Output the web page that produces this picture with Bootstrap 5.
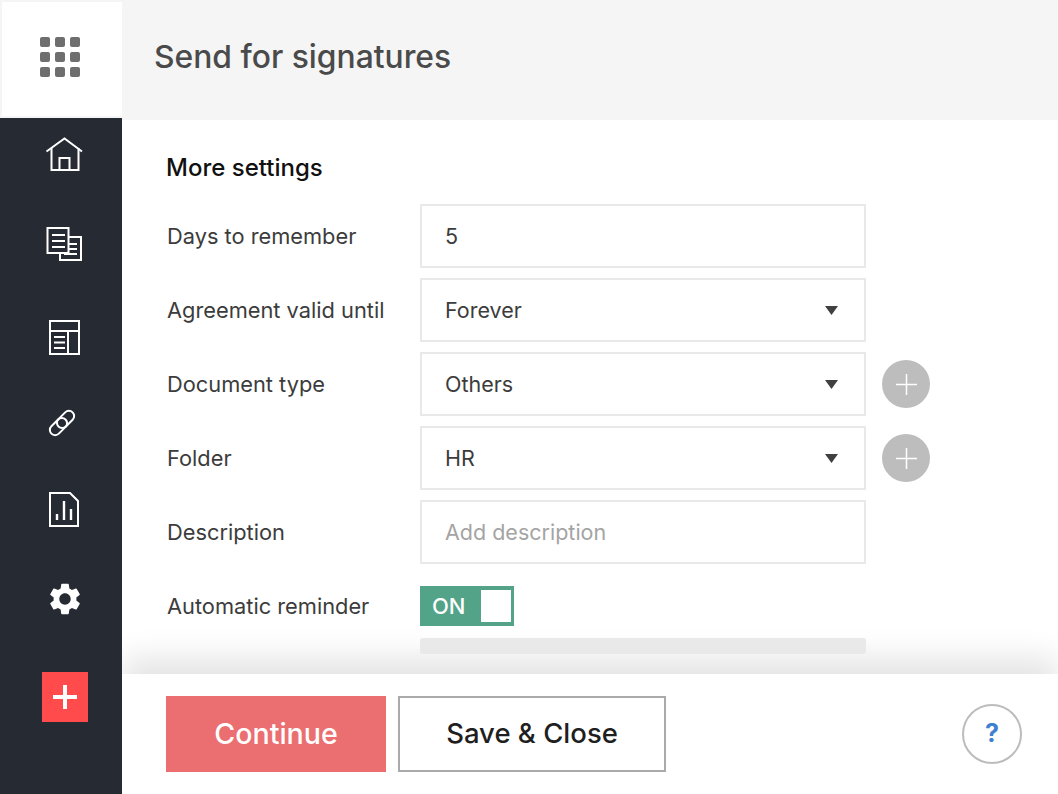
<!DOCTYPE html>
<html lang="en">
<head>
<meta charset="utf-8">
<title>Send for signatures</title>
<link href="https://cdn.jsdelivr.net/npm/bootstrap@5.3.0/dist/css/bootstrap.min.css" rel="stylesheet">
<style>
html,body{height:100%;}
body{font-family:Inter,"Liberation Sans",sans-serif;color:#3c3c3c;background:#fff;overflow:hidden;}
.shell{height:794px;width:1058px;}
.rail{width:122px;background:#262a33;flex:none;}
.logo-cell{height:118px;background:#f5f5f5;padding:2px 0 2px 2px;}
.logo-box{height:114px;width:120px;background:#fff;}
.dots{display:grid;grid-template-columns:repeat(3,10.5px);gap:4.5px;margin-right:4px;margin-bottom:4px;}
.dots i{display:block;height:10.5px;background:#6e6e6e;border-radius:2px;}
.rail svg{display:block;margin-left:42px;}
.ic-home{margin-top:15px;}
.ic-docs{margin-top:46px;}
.ic-table{margin-top:48px;}
.ic-link{margin-top:42px;}
.ic-report{margin-top:43px;}
.rail .ic-gear{margin-left:46px;margin-top:48px;}
.rail-add{width:46px;height:50px;background:#ff4b4b;margin:54px 0 0 42px;}
.rail .rail-add svg{margin:0;}
.page-head{height:120px;background:#f5f5f5;padding:0 0 6px 32px;}
.page-head h1{font-size:31.800px;font-weight:500;color:#4a4a4a;margin:0;}
.body-scroll{padding:31px 0 0 44px;}
.sec-title{font-size:24px;font-weight:500;color:#111;margin:0 0 19px;line-height:34px;}
.set-row{height:64px;margin-bottom:10px;}
.set-label{width:254px;padding-left:1px;font-size:21.800px;flex:none;}
.form-control.fld,.form-select.fld{width:446px;height:64px;border:2px solid #e9e9e9;border-radius:0;padding:0 23px;font-size:21.500px;color:#3c3c3c;box-shadow:none;background-color:#fff;}
.form-select.fld{background-image:url("data:image/svg+xml,%3Csvg xmlns='http://www.w3.org/2000/svg' viewBox='0 0 13 9'%3E%3Cpath fill='%23404040' d='M0 0h13L6.500 9z'/%3E%3C/svg%3E");background-size:13px 9px;background-position:right 26px center;}
.form-control.fld::placeholder{color:#a4a4a4;opacity:1;}
.add-round{width:48px;height:48px;border-radius:50%;background:#bdbdbd;margin-left:16px;border:0;padding:0;}
.toggle-on{width:94px;height:40px;background:#52a387;color:#fff;font-size:22px;font-weight:500;padding:4px 3px 4px 12px;}
.toggle-knob{width:30px;height:32px;background:#fff;display:block;margin-left:auto;}
.ghost-bar{width:446px;height:16px;background:#e9e9e9;border-radius:3px;margin-left:254px;margin-top:-10px;position:relative;z-index:2;}
.foot{height:120px;background:#fff;padding:22px 36px 22px 44px;box-shadow:0 -16px 30px rgba(0,0,0,.11);position:relative;z-index:1;}
.btn.go{width:220px;height:76px;background:#eb6e70;border:0;border-radius:0;color:#fff;font-size:28.600px;font-weight:500;}
.btn.stay{width:268px;height:76px;background:#fff;border:2px solid #aaa;border-radius:0;color:#1f1f1f;font-size:27.500px;font-weight:500;margin-left:12px;}
.help{width:60px;height:60px;border:2px solid #bcbcbc;border-radius:50%;color:#3f80cf;font-size:25px;font-weight:700;}
</style>
</head>
<body>
<div class="shell d-flex">
  <nav class="rail d-flex flex-column">
    <div class="logo-cell">
      <div class="logo-box d-flex align-items-center justify-content-center">
        <div class="dots"><i></i><i></i><i></i><i></i><i></i><i></i><i></i><i></i><i></i></div>
      </div>
    </div>
    <svg class="ic-home" width="44" height="44" viewBox="0 0 44 44" fill="none" stroke="#fff" stroke-width="2"><path d="M4.500 18.500 22.500 5.500 40 18.500"/><path d="M9.500 15V37H36.500V15"/><path d="M17.500 37V25H27.500V37"/></svg>
    <svg class="ic-docs" width="44" height="44" viewBox="0 0 44 44" fill="none" stroke="#fff" stroke-width="2"><rect x="5.500" y="5" width="21" height="25"/><path d="M27 14H39V37H18V30"/><path d="M10 12H23M10 18H23M10 24H23M27 21H35M27 26H35M22 31H35"/></svg>
    <svg class="ic-table" width="44" height="44" viewBox="0 0 44 44" fill="none" stroke="#fff" stroke-width="2"><rect x="8" y="6" width="29" height="33"/><path d="M8 16H37M26 16V39M12 22H23M12 27.500H23M12 33H23"/></svg>
    <svg class="ic-link" width="44" height="44" viewBox="0 0 44 44" fill="none" stroke="#fff" stroke-width="2"><g transform="rotate(-45 20 22)"><rect x="5" y="16.750" width="20" height="10.500" rx="5.250"/><rect x="15" y="16.750" width="20" height="10.500" rx="5.250"/></g></svg>
    <svg class="ic-report" width="44" height="44" viewBox="0 0 44 44" fill="none" stroke="#fff" stroke-width="2"><path d="M8 5H28L36 13V38H8Z"/><path stroke-width="2.400" d="M15 32V26M22 32V13M29 32V21"/></svg>
    <svg class="ic-gear" width="38" height="38" viewBox="0 0 24 24" fill="#fff"><path d="M19.140 12.940c.04-.3.06-.61.06-.94 0-.32-.02-.64-.07-.94l2.030-1.580a.49.49 0 0 0 .12-.61l-1.920-3.320a.488.488 0 0 0-.59-.22l-2.390.96c-.5-.38-1.030-.7-1.620-.94l-.36-2.540a.484.484 0 0 0-.48-.41h-3.840c-.24 0-.43.17-.47.41l-.36 2.540c-.59.24-1.130.57-1.620.94l-2.390-.96c-.22-.08-.47 0-.59.22L2.740 8.870c-.12.21-.08.47.12.61l2.030 1.580c-.05.3-.09.63-.09.94s.02.64.07.94l-2.030 1.580a.49.49 0 0 0-.12.61l1.920 3.320c.12.22.37.29.59.22l2.390-.96c.5.38 1.030.7 1.620.94l.36 2.540c.05.24.24.41.48.41h3.840c.24 0 .44-.17.47-.41l.36-2.540c.59-.24 1.130-.56 1.620-.94l2.390.96c.22.08.47 0 .59-.22l1.920-3.320c.12-.22.07-.47-.12-.61l-2.010-1.580zM12 15.600c-1.980 0-3.600-1.620-3.600-3.600s1.620-3.600 3.600-3.600 3.600 1.620 3.600 3.600-1.620 3.600-3.600 3.600z"/></svg>
    <div class="rail-add d-flex align-items-center justify-content-center">
      <svg width="26" height="26" viewBox="0 0 26 26" stroke="#fff" stroke-width="4"><path d="M13 1V25M1 13H25"/></svg>
    </div>
  </nav>
  <div class="flex-grow-1 d-flex flex-column overflow-hidden">
    <header class="page-head d-flex align-items-center"><h1>Send for signatures</h1></header>
    <main class="body-scroll flex-grow-1 overflow-hidden">
      <h2 class="sec-title">More settings</h2>
      <div class="set-row d-flex align-items-center"><label class="set-label">Days to remember</label><input class="form-control fld" value="5"></div>
      <div class="set-row d-flex align-items-center"><label class="set-label">Agreement valid until</label><select class="form-select fld"><option>Forever</option></select></div>
      <div class="set-row d-flex align-items-center"><label class="set-label">Document type</label><select class="form-select fld"><option>Others</option></select>
        <button class="add-round d-flex align-items-center justify-content-center" aria-label="Add"><svg width="21" height="21" viewBox="0 0 21 21" stroke="#fff" stroke-width="1.500"><path d="M10.500 0V21M0 10.500H21"/></svg></button></div>
      <div class="set-row d-flex align-items-center"><label class="set-label">Folder</label><select class="form-select fld"><option>HR</option></select>
        <button class="add-round d-flex align-items-center justify-content-center" aria-label="Add"><svg width="21" height="21" viewBox="0 0 21 21" stroke="#fff" stroke-width="1.500"><path d="M10.500 0V21M0 10.500H21"/></svg></button></div>
      <div class="set-row d-flex align-items-center"><label class="set-label">Description</label><input class="form-control fld" placeholder="Add description"></div>
      <div class="set-row d-flex align-items-center"><label class="set-label">Automatic reminder</label><div class="toggle-on d-flex align-items-center"><span>ON</span><span class="toggle-knob"></span></div></div>
      <div class="ghost-bar"></div>
    </main>
    <footer class="foot d-flex align-items-center justify-content-between">
      <div class="d-flex"><button class="btn go">Continue</button><button class="btn stay">Save &amp; Close</button></div>
      <div class="help d-flex align-items-center justify-content-center">?</div>
    </footer>
  </div>
</div>
<script src="https://cdn.jsdelivr.net/npm/bootstrap@5.3.0/dist/js/bootstrap.bundle.min.js"></script>
</body>
</html>
